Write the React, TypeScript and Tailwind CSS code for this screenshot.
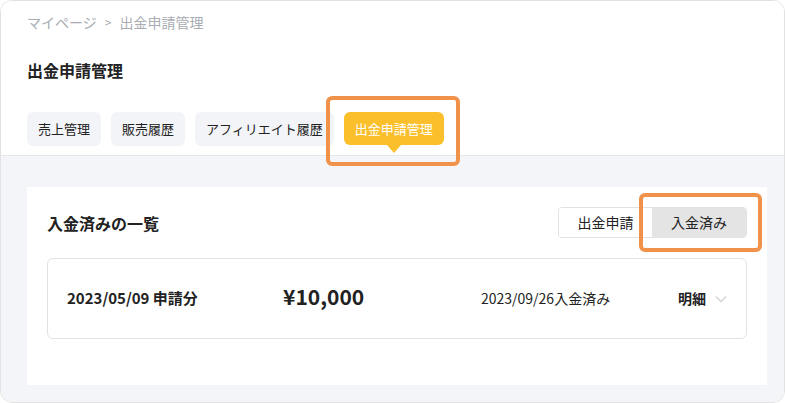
import React from "react";

const font = { fontFamily: '"Noto Sans CJK JP", "Noto Sans", sans-serif' };

function Tab({ label }: { label: string }) {
  return (
    <div className="h-[34px] px-[11px] flex items-center rounded-[6px] bg-[#f3f4f7] text-[13px] text-[#222]">
      {label}
    </div>
  );
}

export default function App() {
  return (
    <div className="w-[785px] h-[403px] bg-white relative" style={font}>
      <div className="w-[785px] h-[403px] border border-[#e2e2e2] rounded-[12px] overflow-hidden flex flex-col">
        <div className="bg-white px-[26px] pt-[11px] pb-[9px]">
          <div className="flex items-center h-[20px] text-[14px] text-[#a9adb3] gap-[8px]">
            <span>マイページ</span>
            <span className="text-[12px]">&gt;</span>
            <span>出金申請管理</span>
          </div>
          <div className="mt-[28px] h-[20px] flex items-center text-[16px] font-bold text-[#222]">
            出金申請管理
          </div>
          <div className="mt-[32px] flex gap-[10px]">
            <Tab label="売上管理" />
            <Tab label="販売履歴" />
            <Tab label="アフィリエイト履歴" />
            <div className="relative h-[33px] w-[100px] flex items-center justify-center rounded-[6px] bg-[#fbbf2c] text-[13px] text-white">
              出金申請管理
              <div className="absolute left-1/2 -translate-x-1/2 top-full w-0 h-0 border-l-[7px] border-r-[7px] border-t-[8px] border-l-transparent border-r-transparent border-t-[#fbbf2c]" />
            </div>
          </div>
        </div>
        <div className="flex-1 bg-[#f4f5f8] border-t border-[#e6e7ea] pt-[31px] pl-[26px] pr-[17px]">
          <div className="bg-white px-[20px] pt-[20px] pb-[46px]">
            <div className="flex items-center justify-between h-[31px]">
              <div className="text-[16px] font-bold text-[#222]">入金済みの一覧</div>
              <div className="flex h-[31px] rounded-[4px] border border-[#e2e2e2] overflow-hidden text-[14px] text-[#222]">
                <div className="w-[93px] flex items-center justify-center bg-white">出金申請</div>
                <div className="w-[94px] flex items-center justify-center bg-[#e4e4e4]">入金済み</div>
              </div>
            </div>
            <div className="mt-[20px] h-[81px] border border-[#e2e2e2] rounded-[6px] flex items-center pl-[19px] text-[#222]">
              <div className="w-[216px] text-[15px] font-bold">2023/05/09 申請分</div>
              <div className="w-[198px] text-[21px] font-bold leading-none -mt-[4px]">¥10,000</div>
              <div className="w-[197px] text-[14px]">2023/09/26入金済み</div>
              <div className="text-[14px] font-bold">明細</div>
              <svg className="ml-[9px]" width="12" height="8" viewBox="0 0 12 8" fill="none">
                <path d="M1 1.5 L6 6.5 L11 1.5" stroke="#d3d3d3" strokeWidth="1.3" />
              </svg>
            </div>
          </div>
        </div>
      </div>
      <div className="absolute left-[326px] top-[96px] w-[134px] h-[70px] border-[4px] border-[#f0924a] rounded-[6px]" />
      <div className="absolute left-[639px] top-[193px] w-[123px] h-[59px] border-[4px] border-[#f0924a] rounded-[6px]" />
    </div>
  );
}
